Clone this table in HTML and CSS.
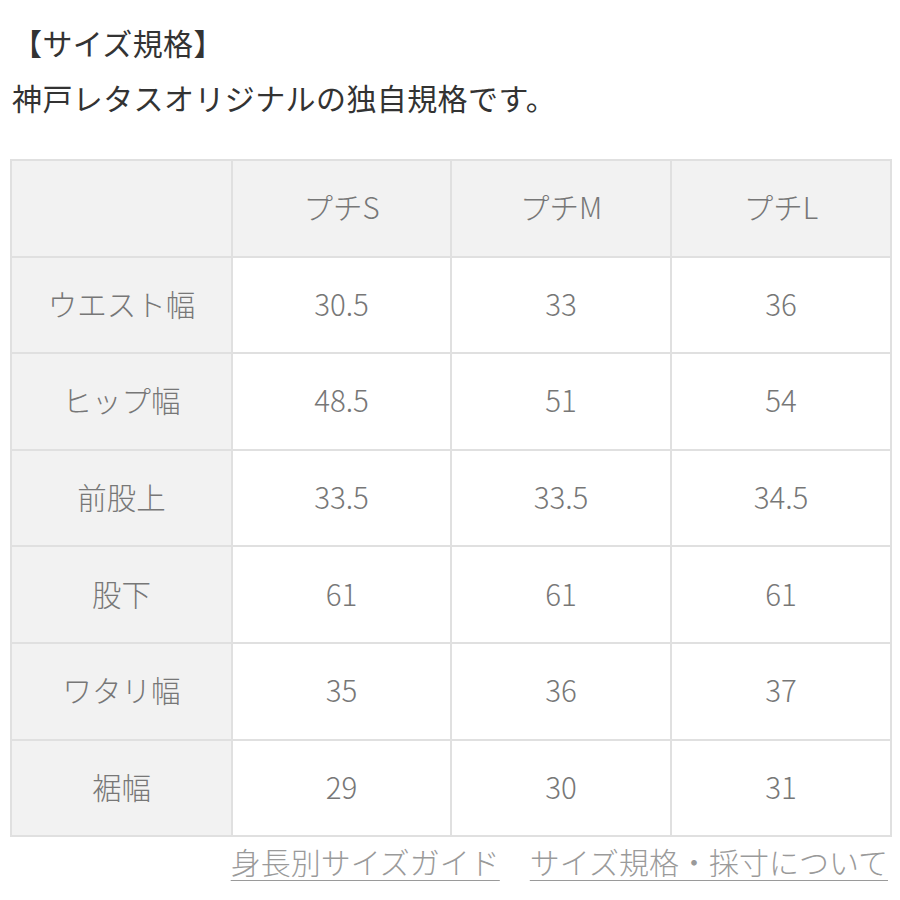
FILE: index.html
```html
<!DOCTYPE html>
<html lang="ja">
<head>
<meta charset="utf-8">
<link rel="stylesheet" href="styles.css">
</head>
<body>
<div class="page">
  <p class="intro">【サイズ規格】<br>神戸レタスオリジナルの独自規格です。</p>
  <table class="size">
    <colgroup><col class="c0"><col class="c1"><col class="c2"><col class="c3"></colgroup>
    <tr class="head"><th></th><th>プチS</th><th>プチM</th><th>プチL</th></tr>
    <tr><th>ウエスト幅</th><td>30.5</td><td>33</td><td>36</td></tr>
    <tr><th>ヒップ幅</th><td>48.5</td><td>51</td><td>54</td></tr>
    <tr><th>前股上</th><td>33.5</td><td>33.5</td><td>34.5</td></tr>
    <tr><th>股下</th><td>61</td><td>61</td><td>61</td></tr>
    <tr><th>ワタリ幅</th><td>35</td><td>36</td><td>37</td></tr>
    <tr><th>裾幅</th><td>29</td><td>30</td><td>31</td></tr>
  </table>
  <div class="links">
    <a href="#">身長別サイズガイド</a>
    <a href="#">サイズ規格・採寸について</a>
  </div>
</div>
</body>
</html>
```
FILE: styles.css
```css
html, body { margin: 0; padding: 0; background: #fff; }
.page {
  width: 900px;
  font-family: "Noto Sans CJK JP", sans-serif;
  color: #333;
}
.intro {
  margin: 0;
  padding: 15px 0 0 12px;
  font-size: 30px;
  line-height: 55px;
  letter-spacing: 0.4px;
  font-weight: 400;
}
.size {
  margin: 34px 0 0 10px;
  width: 880px;
  border-collapse: collapse;
  table-layout: fixed;
  font-size: 29.5px;
  color: #777;
}
.c0 { width: 221px; }
.c1 { width: 219px; }
.c2 { width: 220px; }
.c3 { width: 220px; }
.size th, .size td {
  border: 2px solid #e0e0e0;
  height: 90.6px;
  padding: 0 0 4px;
  text-align: center;
  vertical-align: middle;
  font-weight: 300;
  line-height: 40px;
}
.size th { background: #f2f2f2; }
.size td { background: #fff; }
.links {
  display: flex;
  justify-content: flex-end;
  gap: 30px;
  padding: 4px 12px 0 0;
  font-size: 30px;
  font-weight: 300;
  line-height: 40px;
}
.links a {
  color: #9a9a9a;
  text-decoration: underline;
  text-decoration-thickness: 2px;
  text-underline-offset: 6px;
}
```
